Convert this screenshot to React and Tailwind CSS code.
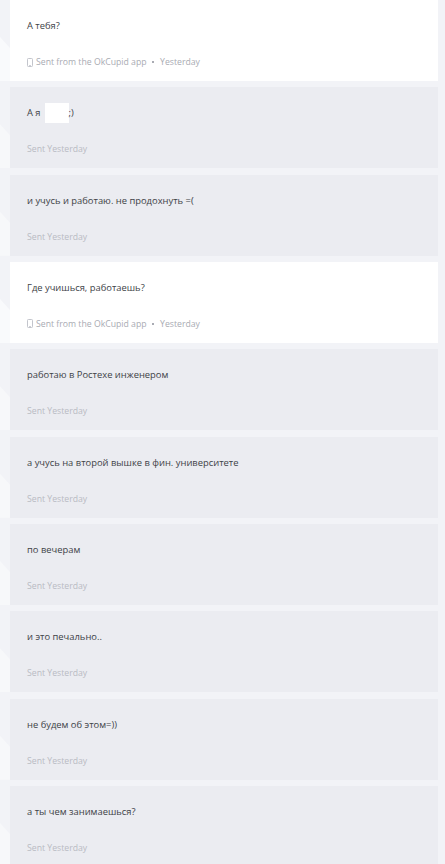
import React from "react";

const MESSAGES = [
  { text: "А тебя?", mine: false },
  { text: "А я", redacted: true, tail: ";)", mine: true },
  { text: "и учусь и работаю. не продохнуть =(", mine: true },
  { text: "Где учишься, работаешь?", mine: false },
  { text: "работаю в Ростехе инженером", mine: true },
  { text: "а учусь на второй вышке в фин. университете", mine: true },
  { text: "по вечерам", mine: true },
  { text: "и это печально..", mine: true },
  { text: "не будем об этом=))", mine: true },
  { text: "а ты чем занимаешься?", mine: true },
];

function PhoneIcon() {
  return (
    <svg width="6" height="9" viewBox="0 0 6 9" className="shrink-0">
      <rect x="0.5" y="0.5" width="5" height="8" rx="0.8" fill="none" stroke="#c3c5cc" strokeWidth="1" />
      <rect x="2" y="7" width="2" height="0.8" fill="#c3c5cc" />
    </svg>
  );
}

function Bubble({ msg }) {
  const bg = msg.mine ? "bg-[#ebecf1]" : "bg-white";
  const tailBg = msg.mine ? "bg-[#f7f8fa]" : "bg-[#f9fafc]";
  return (
    <div className="relative h-[81px] pl-[10px] pr-[7px]">
      {/* little tail on the left */}
      <div
        className={`absolute left-0 top-[37px] w-[10px] h-[44px] ${tailBg} [clip-path:polygon(0_0,100%_25%,100%_100%,0_100%)]`}
      />
      <div className={`h-full ${bg} pl-[17px] pt-[19px]`}>
        <div className="flex items-center h-[14px] text-[9.4px] leading-[14px] text-[#404247]">
          <span>{msg.text}</span>
          {msg.redacted && (
            <>
              <span className="ml-[4px] w-[24px] h-[20px] bg-white" />
              <span>{msg.tail}</span>
            </>
          )}
        </div>
        <div className="mt-[23px] flex items-center h-[12px] text-[8.7px] leading-[12px]">
          {msg.mine ? (
            <span className="text-[#b9bbc3]">Sent Yesterday</span>
          ) : (
            <>
              <PhoneIcon />
              <span className="ml-[3px] text-[#a9abb3]">Sent from the OkCupid app</span>
              <span className="ml-[5px] mr-[6px] w-[2.5px] h-[2.5px] bg-[#a9abb3]" />
              <span className="text-[#a9abb3]">Yesterday</span>
            </>
          )}
        </div>
      </div>
    </div>
  );
}

export default function App() {
  return (
    <div className="min-h-[864px] w-[445px] bg-[#f2f3f7] font-['Open_Sans',sans-serif] overflow-hidden">
      <div className="flex flex-col gap-[6.33px]">
        {MESSAGES.map((m, i) => (
          <Bubble key={i} msg={m} />
        ))}
      </div>
    </div>
  );
}
